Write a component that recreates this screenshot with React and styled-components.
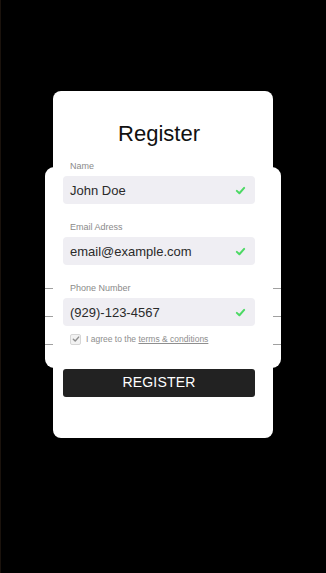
import React from 'react';
import styled, { createGlobalStyle } from 'styled-components';

const fields = [
  { label: 'Name', value: 'John Doe' },
  { label: 'Email Adress', value: 'email@example.com' },
  { label: 'Phone Number', value: '(929)-123-4567' },
];

const Check = ({ color = '#4cd964', size = 11 }) => (
  <svg width={size} height={size} viewBox="0 0 12 12">
    <path d="M2 6.4 L4.8 9 L10 3.2" fill="none" stroke={color} strokeWidth="2.2" strokeLinecap="round" strokeLinejoin="round" />
  </svg>
);

const App = () => {
  return (
    <>
      <GlobalStyle />
      <Stage>
        <BackCard>
          <BackRow />
          <BackRow />
          <BackRow last />
        </BackCard>
        <Card>
          <Title>Register</Title>
          {fields.map((f) => (
            <Field key={f.label}>
              <Label>{f.label}</Label>
              <InputBox>
                <span>{f.value}</span>
                <Check />
              </InputBox>
            </Field>
          ))}
          <AgreeRow>
            <Box>
              <Check color="#8e8e8e" size={8} />
            </Box>
            <span>
              I agree to the <TermsLink>terms &amp; conditions</TermsLink>
            </span>
          </AgreeRow>
          <Button>REGISTER</Button>
        </Card>
      </Stage>
    </>
  );
};

export default App;

const GlobalStyle = createGlobalStyle`
  html, body {
    margin: 0;
    padding: 0;
    background: #000;
  }
  body {
    font-family: "Liberation Sans", Arial, sans-serif;
  }
`;

const Stage = styled.div`
  width: 326px;
  height: 573px;
  display: grid;
  grid-template-columns: 1fr;
  grid-template-rows: 1fr;
  border-left: 1px solid #1a120c;
  box-sizing: border-box;
`;

const BackCard = styled.div`
  grid-area: 1 / 1;
  justify-self: center;
  align-self: start;
  margin-top: 167px;
  margin-left: -1px;
  width: 236px;
  height: 201px;
  background: #fff;
  border-radius: 9px;
  display: flex;
  flex-direction: column;
  justify-content: flex-end;
  overflow: hidden;
`;

const BackRow = styled.div`
  height: ${({ last }) => (last ? '23px' : '27px')};
  border-top: 1px solid #a0a0a0;
`;

const Card = styled.div`
  grid-area: 1 / 1;
  justify-self: center;
  align-self: start;
  margin-top: 91px;
  margin-left: -1px;
  width: 220px;
  height: 347px;
  box-sizing: border-box;
  background: #fff;
  border-radius: 8px;
  padding: 30px 18px 0 10px;
  display: flex;
  flex-direction: column;
`;

const Title = styled.h1`
  margin: 0 0 14px;
  height: 26px;
  line-height: 26px;
  font-size: 22px;
  font-weight: 400;
  color: #111;
  text-align: center;
`;

const Field = styled.div`
  display: flex;
  flex-direction: column;
  margin-bottom: 18px;
  &:nth-of-type(3) {
    margin-bottom: 0;
  }
`;

const Label = styled.div`
  font-size: 9px;
  line-height: 11px;
  color: #8a8a8a;
  padding-left: 7px;
  margin-bottom: 4px;
`;

const InputBox = styled.div`
  height: 28px;
  border-radius: 4px;
  background: #efeef3;
  display: flex;
  align-items: center;
  justify-content: space-between;
  padding: 0 9px 0 7px;
  font-size: 13px;
  color: #2a2a2a;
`;

const AgreeRow = styled.div`
  display: flex;
  align-items: center;
  gap: 5px;
  margin-top: 8px;
  padding-left: 7px;
  height: 10px;
  font-size: 8.5px;
  color: #8e8e8e;
`;

const Box = styled.div`
  width: 9px;
  height: 9px;
  border: 1px solid #d6d6d6;
  border-radius: 2px;
  background: #f2f2f2;
  display: flex;
  align-items: center;
  justify-content: center;
`;

const TermsLink = styled.span`
  text-decoration: underline;
`;

const Button = styled.div`
  margin-top: 25px;
  height: 28px;
  border-radius: 3px;
  background: #222;
  color: #fff;
  font-size: 14px;
  line-height: 14px;
  padding-bottom: 3px;
  box-sizing: border-box;
  display: flex;
  align-items: center;
  justify-content: center;
  letter-spacing: 0.2px;
`;
